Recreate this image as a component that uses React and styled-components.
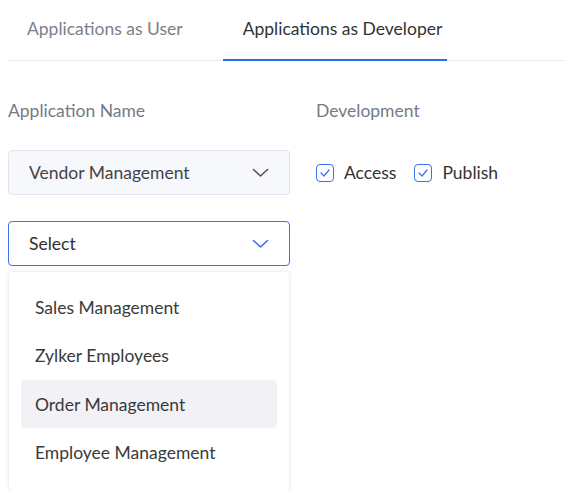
import React from "react";
import styled, { createGlobalStyle } from "styled-components";

const Global = createGlobalStyle`
  html, body { margin: 0; padding: 0; background: #fff; }
  body { font-family: Lato, "Noto Sans", sans-serif; }
`;

const Page = styled.div`
  width: 565px;
  height: 491px;
  overflow: hidden;
  padding-left: 8px;
  box-sizing: border-box;
`;

const Tabs = styled.div`
  display: flex;
  gap: 20px;
  height: 60px;
  border-bottom: 1px solid #e7ebf1;
`;

const Tab = styled.div`
  display: flex;
  align-items: center;
  padding: 0 ${(p) => (p.$active ? "5px" : "20px")} 2px 20px;
  margin-left: ${(p) => (p.$first ? "-1px" : "0")};
  font-size: 17.5px;
  color: ${(p) => (p.$active ? "#333" : "#7b7f8b")};
  border-bottom: 2px solid ${(p) => (p.$active ? "#2f6ae9" : "transparent")};
  margin-bottom: -1px;
`;

const Form = styled.div`
  display: flex;
  gap: 26px;
  padding-top: 39px;
`;

const Column = styled.div`
  display: flex;
  flex-direction: column;
  width: ${(p) => p.$w || "auto"};
`;

const Label = styled.div`
  font-size: 17.5px;
  color: #767a86;
  height: 22px;
  line-height: 22px;
  margin-bottom: 28px;
`;

const Field = styled.div`
  position: relative;
  height: 45px;
  box-sizing: border-box;
  display: flex;
  align-items: center;
  justify-content: space-between;
  padding: 0 20px 0 20px;
  border-radius: 4px;
  border: 1px solid ${(p) => (p.$open ? "#3a6ff0" : "#e1e4ec")};
  background: ${(p) => (p.$open ? "#fff" : "#f7f8fc")};
  font-size: 17.5px;
  color: ${(p) => (p.$open ? "#2f2f2f" : "#444")};
  margin-bottom: 26px;
`;

const Menu = styled.div`
  position: absolute;
  left: 0;
  top: 50px;
  width: 280px;
  height: 219px;
  box-sizing: border-box;
  background: #fff;
  border-radius: 4px;
  box-shadow: 0 0 4px rgba(30, 40, 70, 0.14);
  padding: 11px 12px 0;
  display: flex;
  flex-direction: column;
`;

const Item = styled.div`
  height: 48px;
  margin-bottom: 0.5px;
  display: flex;
  align-items: center;
  padding-left: 14px;
  border-radius: 4px;
  font-size: 17.5px;
  color: #3a3a3a;
  background: ${(p) => (p.$hover ? "#f1f1f6" : "transparent")};
`;

const Checks = styled.div`
  display: flex;
  align-items: center;
  height: 45px;
  gap: 18px;
`;

const Check = styled.label`
  display: flex;
  align-items: center;
  gap: 10px;
  font-size: 17.5px;
  color: #333;
`;

const Box = styled.span`
  width: 18px;
  height: 18px;
  box-sizing: border-box;
  border: 1.5px solid #3a6ff0;
  border-radius: 4px;
  display: flex;
  align-items: center;
  justify-content: center;
`;

const Chevron = ({ color }) => (
  <svg width="17" height="10" viewBox="0 0 17 10">
    <polyline points="1.5,1.5 8.5,8 15.5,1.5" fill="none" stroke={color} strokeWidth="1.6" strokeLinecap="round" strokeLinejoin="round" />
  </svg>
);

const Tick = () => (
  <Box>
    <svg width="10" height="8" viewBox="0 0 10 8">
      <polyline points="1,4 4,7 9,1" fill="none" stroke="#3a6ff0" strokeWidth="1.2" strokeLinecap="round" strokeLinejoin="round" />
    </svg>
  </Box>
);

const items = ["Sales Management", "Zylker Employees", "Order Management", "Employee Management"];

export default function App() {
  return (
    <Page>
      <Global />
      <Tabs>
        <Tab $first>Applications as User</Tab>
        <Tab $active>Applications as Developer</Tab>
      </Tabs>
      <Form>
        <Column $w="282px">
          <Label>Application Name</Label>
          <Field>
            Vendor Management
            <Chevron color="#555" />
          </Field>
          <Field $open>
            Select
            <Chevron color="#3a6ff0" />
            <Menu>
              {items.map((t) => (
                <Item key={t} $hover={t === "Order Management"}>{t}</Item>
              ))}
            </Menu>
          </Field>
        </Column>
        <Column>
          <Label>Development</Label>
          <Checks>
            <Check><Tick />Access</Check>
            <Check><Tick />Publish</Check>
          </Checks>
        </Column>
      </Form>
    </Page>
  );
}
